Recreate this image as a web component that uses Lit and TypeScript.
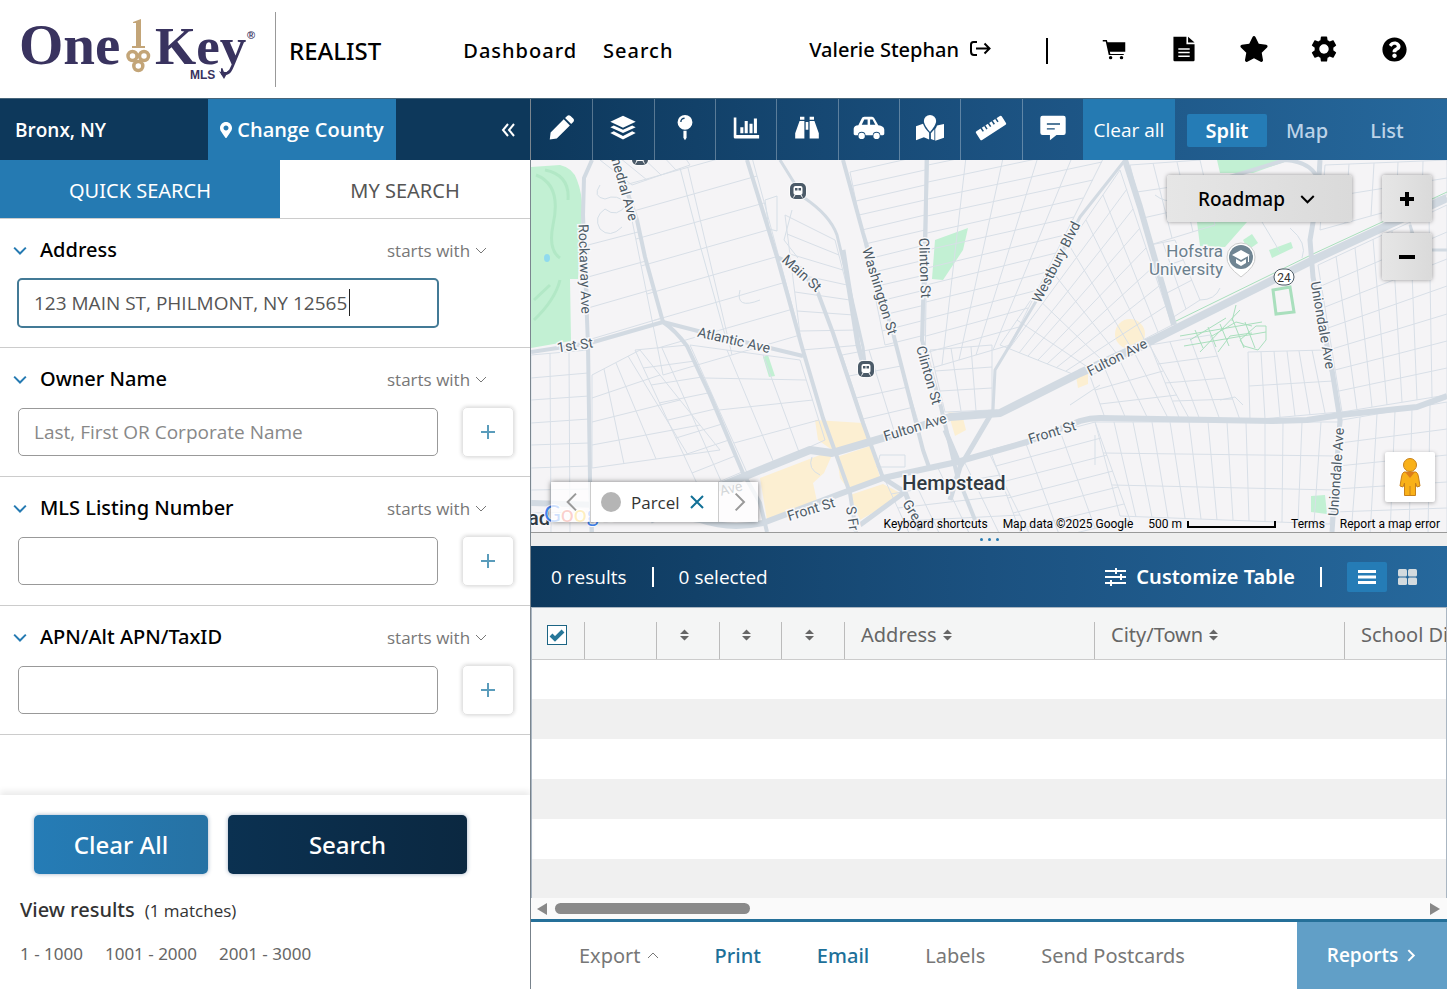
import { LitElement, html, svg, css } from "lit";
import { customElement, property } from "lit/decorators.js";
import { classMap } from "lit/directives/class-map.js";

type Pt = [number, number];

const shared = css`
  :host { display: block; font-family: "Open Sans", sans-serif; }
  * { box-sizing: border-box; }
  button, input, select { font: inherit; color: inherit; margin: 0; }
  button { border: 0; background: none; padding: 0; cursor: pointer; }
  select { appearance: none; border: 0; background: none; padding: 0; cursor: pointer; }
  a { color: inherit; text-decoration: none; }
  svg { display: block; flex: none; }
`;

const chevron = (dir: "down" | "up" | "right" | "left", size: number, width = 2) => {
  const d = { down: "M1 4l5 5 5-5", up: "M1 9l5-5 5 5", right: "M4 1l5 5-5 5", left: "M9 1L4 6l5 5" }[dir];
  return html`<svg width=${size} height=${size} viewBox="0 0 12 12" fill="none" stroke="currentColor" stroke-width=${width} aria-hidden="true"><path d=${d} vector-effect="non-scaling-stroke"></path></svg>`;
};

const icons: Record<string, unknown> = {
  pencil: svg`<path d="M3 29l1-8L19 6l7 7L11 28z M20.500 4.500l2.300-2.300c1.200-1.200 2.800-1.200 4 0l3 3c1.200 1.200 1.200 2.800 0 4l-2.300 2.300z" transform="translate(-1 0)"/>`,
  layers: svg`<path d="M16 2l14.500 6.800L16 15.600 1.500 8.800z"/><path d="M5.500 13l-4 2L16 21.800 30.500 15l-4-2L16 18z"/><path d="M5.500 19.600l-4 2L16 29.200l14.500-7.600-4-2L16 25z"/>`,
  pin: svg`<path fill-rule="evenodd" d="M16 1a8.500 8.500 0 1 1 0 17 8.500 8.500 0 0 1 0-17zm-.5 3a5 5 0 0 0-5 5.200h1.600a3.400 3.400 0 0 1 3.400-3.600z"/><path d="M14.200 19h3.600v8L16 30l-1.800-3z"/>`,
  chart: svg`<path d="M2 4h3v20h26v4H3.500A1.500 1.500 0 0 1 2 26.500zM9.500 15H13v7H9.500zM14.500 8H18v14h-3.500zM20 11h3.500v11H20zM25 5h3.500v17H25z"/>`,
  binoculars: svg`<path d="M8 3h5v3.500H8zM19 3h5v3.500h-5zM7.500 8H13v20H2.500v-6zM24.500 8H19v20h10.500v-6zM14.500 9h3v9h-3z"/>`,
  car: svg`<path fill-rule="evenodd" d="M5 12l3.500-7C9 4 10 3 11.500 3H19c1.500 0 2.500.6 3.200 1.600L26.500 12c4 .5 6.500 2 6.500 5v4c0 1-.6 1.800-1.600 1.800h-2.600a4.200 4.200 0 0 0-8.300 0h-7.700a4.200 4.200 0 0 0-8.300 0H1.600C.6 22.800 0 22 0 21v-5c0-2.500 2-4 5-4zm3.700-.5H15V6h-3.600zm9-5.500v5.500h5.600L20.300 6z" transform="translate(-1.500 0) scale(1.060)"/><circle cx="7.600" cy="25" r="3.600"/><circle cx="24.600" cy="25" r="3.600"/>`,
  mapPin: svg`<path d="M16 1a7 7 0 0 1 7 7C23 13 16 20.500 16 20.500S9 13 9 8a7 7 0 0 1 7-7z"/><path d="M0 14l8-3c1 3 3.500 7 7 10.500V29l-6-2.500L0 30zM32 11.500V27l-10 3.500V17c1-1.500 1.700-2.800 2-4zM17 22l4-4.500V30l-4-1.500z"/>`,
  ruler: svg`<path d="M0 10h32a1.500 1.500 0 0 1 1.500 1.500v9A1.500 1.500 0 0 1 32 22H0a1.500 1.500 0 0 1-1.500-1.500v-9A1.500 1.500 0 0 1 0 10z" transform="rotate(-33 16 16)"/><path d="M6.500 9.500v5M11.500 9.500v5M16.500 9.500v5M21.500 9.500v5M26.500 9.500v5" stroke="#1b4f7a" stroke-width="1.700" transform="rotate(-33 16 16)"/>`,
  comment: svg`<path d="M4 2h24a2.500 2.500 0 0 1 2.500 2.500v17A2.500 2.500 0 0 1 28 24h-8l-7.500 6v-6H4a2.500 2.500 0 0 1-2.500-2.500v-17A2.500 2.500 0 0 1 4 2z"/><path d="M9 11.500h15M9 17h9" stroke="#1b4f7a" stroke-width="1.600"/>`,
  cart: svg`<path d="M1 4h5.500l.8 3H31v12.500H10.500l.6 3H29V24H9L5 6H1z"/><circle cx="11.500" cy="27.500" r="2.300"/><circle cx="26" cy="27.500" r="2.300"/>`,
  file: svg`<path fill-rule="evenodd" d="M3 1h16v9h10v19.500a1.500 1.500 0 0 1-1.500 1.500h-23A1.500 1.500 0 0 1 3 29.500zM9 15v1.800h14V15zm0 4.500v1.800h14v-1.800zm0 4.500v1.800h14V24zM21 1l8 7h-8z"/>`,
  star: svg`<path transform="scale(.0625) translate(-32 0)" d="M259.3 17.800L194 150.200 47.900 171.500c-26.200 3.800-36.700 36.100-17.700 54.600l105.700 103-25 145.500c-4.500 26.300 23.200 46 46.400 33.700L288 439.600l130.700 68.700c23.200 12.200 50.900-7.400 46.400-33.700l-25-145.500 105.700-103c19-18.500 8.500-50.800-17.700-54.600L382 150.200 316.700 17.800c-11.700-23.600-45.600-23.900-57.400 0z"/>`,
  gear: svg`<path transform="translate(-3.200 -3.200) scale(1.600)" d="M19.140 12.940c.04-.3.060-.61.060-.94 0-.32-.02-.64-.07-.94l2.030-1.580c.18-.14.230-.41.120-.61l-1.920-3.320c-.12-.22-.37-.29-.59-.22l-2.390.96c-.5-.38-1.030-.7-1.620-.94l-.36-2.540c-.04-.24-.24-.41-.48-.41h-3.840c-.24 0-.43.170-.47.410l-.36 2.540c-.59.240-1.130.570-1.620.940l-2.390-.96c-.22-.08-.47 0-.59.220L2.740 8.870c-.12.210-.08.470.120.610l2.030 1.580c-.05.300-.09.630-.09.940s.02.640.07.940l-2.030 1.580c-.18.140-.23.410-.12.610l1.920 3.320c.12.220.37.290.59.220l2.390-.96c.5.380 1.030.7 1.620.94l.36 2.540c.05.240.24.410.48.410h3.840c.24 0 .44-.17.470-.41l.36-2.540c.59-.24 1.130-.56 1.620-.94l2.390.96c.22.080.47 0 .59-.22l1.920-3.320c.12-.22.070-.47-.12-.61zM12 15.600c-1.980 0-3.600-1.620-3.600-3.600s1.620-3.600 3.600-3.600 3.600 1.620 3.600 3.600-1.620 3.600-3.600 3.600z"/>`,
  help: svg`<path transform="scale(.0625)" d="M504 256c0 136.997-111.043 248-248 248S8 392.997 8 256C8 119.083 119.043 8 256 8s248 111.083 248 248zM262.655 90c-54.497 0-89.255 22.957-116.549 63.758-3.536 5.286-2.353 12.415 2.715 16.258l34.699 26.310c5.205 3.947 12.621 3.008 16.665-2.122 17.864-22.658 30.113-35.797 57.303-35.797 20.429 0 45.698 13.148 45.698 32.958 0 14.976-12.363 22.667-32.534 33.976C247.128 238.528 216 254.941 216 296v4c0 6.627 5.373 12 12 12h56c6.627 0 12-5.373 12-12v-1.333c0-28.462 83.186-29.647 83.186-106.667 0-58.002-60.165-102-116.531-102zM256 338c-25.365 0-46 20.635-46 46 0 25.364 20.635 46 46 46s46-20.636 46-46c0-25.365-20.635-46-46-46z"/>`,
};

const icon = (name: string, size: number) =>
  html`<svg width=${size} height=${size} viewBox="0 0 32 32" fill="currentColor" overflow="visible" aria-hidden="true">${icons[name]}</svg>`;

/* ---------- header ---------- */

@customElement("site-header")
export class SiteHeader extends LitElement {
  static styles = [shared, css`
    .bar { display: flex; align-items: center; height: 99px; background: #fff; color: #000; border-bottom: 1px solid #47657a; font-family: "Noto Sans", "Open Sans", sans-serif; font-size: 20px; font-weight: 500; }
    .logo { margin-left: 18px; }
    .product { display: flex; align-items: center; height: 75px; margin-left: 17px; padding: 2px 0 0 13px; border-left: 1px solid #999; font-size: 24px; }
    nav { display: flex; gap: 26px; margin: 3px 0 0 82px; letter-spacing: 1px; }
    .user { display: flex; align-items: center; gap: 10px; margin-left: auto; }
    .rule { width: 2px; height: 26px; margin: 4px 0 0 55px; background: #000; }
    .actions { display: flex; gap: 44px; margin: 0 40px 0 53px; }
    .actions button { display: grid; place-items: center; width: 26px; height: 32px; }
  `];

  render() {
    return html`
      <header class="bar">
        <a class="logo" href="#" aria-label="OneKey MLS">
          <svg width="240" height="76" viewBox="18 12 240 76" fill="#39335f">
            <g font-family="Liberation Serif, serif" font-weight="bold">
              <text x="19" y="65" font-size="57">One</text>
              <text x="155" y="65" font-size="53">Key</text>
            </g>
            <g fill="#c3a578">
              <path d="M133 23l8-3v27h4v2h-13v-2h4V24h-3z"></path>
              <g fill="none" stroke="#c3a578" stroke-width="3.500">
                <circle cx="132.500" cy="57" r="4.500"></circle><circle cx="144" cy="57" r="4.500"></circle><circle cx="138.300" cy="67" r="4.500"></circle>
              </g>
            </g>
            <path d="M219 72q6 4 10-1l-5 9z"></path>
            <text x="190" y="80" font-family="Liberation Sans, sans-serif" font-weight="bold" font-size="12">MLS</text>
            <text x="247" y="40" font-family="Liberation Sans, sans-serif" font-weight="bold" font-size="11">®</text>
          </svg>
        </a>
        <div class="product">REALIST</div>
        <nav><a href="#">Dashboard</a><a href="#">Search</a></nav>
        <a class="user" href="#">Valerie Stephan
          <svg width="22" height="20" viewBox="0 0 22 20" fill="none" stroke="#000" stroke-width="2"><path d="M8 3H4.500Q2 3 2 5.500v7Q2 16 5 16h3M7 9.500h13M15.500 4.500l5 5-5 5"></path></svg>
        </a>
        <div class="rule"></div>
        <div class="actions">
          <button aria-label="Cart">${icon("cart", 24)}</button>
          <button aria-label="Documents">${icon("file", 26)}</button>
          <button aria-label="Favorites">${icon("star", 26)}</button>
          <button aria-label="Settings">${icon("gear", 26)}</button>
          <button aria-label="Help">${icon("help", 25)}</button>
        </div>
      </header>`;
  }
}

/* ---------- search panel ---------- */

interface Field { id: string; label: string; value?: string; placeholder?: string; add: boolean; active?: boolean }

const fields: Field[] = [
  { id: "address", label: "Address", value: "123 MAIN ST, PHILMONT, NY 12565", add: false, active: true },
  { id: "owner", label: "Owner Name", placeholder: "Last, First OR Corporate Name", add: true },
  { id: "mls", label: "MLS Listing Number", add: true },
  { id: "apn", label: "APN/Alt APN/TaxID", add: true },
];

@customElement("search-panel")
export class SearchPanel extends LitElement {
  static styles = [shared, css`
    :host { display: flex; flex-direction: column; min-height: 0; background: #fff; }
    .county { display: flex; align-items: stretch; height: 61px; background: #0d385b; color: #fff; font-size: 20px; font-weight: 600; }
    .place { display: flex; align-items: center; width: 208px; padding-left: 15px; font-size: 19px; }
    .change { display: flex; align-items: center; justify-content: center; gap: 5px; width: 188px; background: #257ab2; }
    .collapse { margin-left: auto; padding: 0 15px; }
    .tabs { display: grid; grid-template-columns: 280px 1fr; height: 59px; border-bottom: 1px solid #ccc; font-family: "Noto Sans", "Open Sans", sans-serif; font-size: 20px; }
    .tab { padding-top: 2px; color: #555; }
    .tab.on { background: #257ab2; color: #fff; }
    .field { display: grid; grid-template-columns: 422px 52px; column-gap: 23px; align-content: start; height: 129px; padding: 16px 15px 0 17px; border-bottom: 1px solid #ccc; }
    .head { grid-column: 1 / -1; display: flex; align-items: center; height: 28px; padding-right: 27px; margin-bottom: 15px; }
    .head > svg { color: #257ab2; margin: 2px 13px 0 -4px; }
    .head label { font-family: "Noto Sans", "Open Sans", sans-serif; font-size: 20px; font-weight: 500; color: #000; }
    .mode { display: flex; align-items: center; gap: 4px; margin-left: auto; padding-top: 2px; font-size: 17px; color: #777; }
    .box { position: relative; display: flex; }
    .box input { flex: 1; height: 48px; margin: 1px; padding: 0 15px; border: 1px solid #999; border-radius: 5px; background: #fff; outline: 0; font-size: 19px; color: #555; }
    .box input::placeholder { color: #888; opacity: 1; }
    .box.active input { height: 50px; margin: 0; border: 2px solid #437a96; }
    .caret { position: absolute; left: 332px; top: 11px; width: 1px; height: 27px; background: #222; }
    .add { display: grid; place-items: center; height: 50px; border: 1px solid #e4e4e4; border-radius: 5px; box-shadow: 0 0 4px rgba(0, 0, 0, .2); color: #5a9cbb; }
    .actions { margin-top: auto; height: 194px; padding: 20px 20px 0 20px; box-shadow: 0 -4px 6px rgba(0, 0, 0, .08); }
    .buttons { display: grid; grid-template-columns: 174px 239px; gap: 20px; height: 59px; padding-left: 14px; font-family: "Noto Sans", "Open Sans", sans-serif; font-size: 24px; font-weight: 500; color: #fff; }
    .buttons button { border-radius: 5px; box-shadow: 0 0 4px rgba(20, 60, 110, .4); }
    .clear { background: linear-gradient(90deg, #257cb6, #2672a4); }
    .go { background: linear-gradient(90deg, #0b3151, #0b2841); }
    .matches { display: flex; align-items: baseline; gap: 10px; margin-top: 22px; font-family: "Noto Sans", "Open Sans", sans-serif; font-size: 20px; line-height: 28px; font-weight: 500; color: #333; }
    .matches small { font-family: "Open Sans", sans-serif; font-size: 17px; font-weight: 400; }
    .ranges { display: flex; gap: 22px; margin-top: 17px; font-family: "Noto Sans", "Open Sans", sans-serif; font-size: 17px; line-height: 24px; color: #666; }
  `];

  private field(f: Field) {
    return html`
      <section class="field">
        <div class="head">
          ${chevron("down", 14)}
          <label for=${f.id}>${f.label}</label>
          <div class="mode">
            <select aria-label="${f.label} match"><option>starts with</option></select>
            ${chevron("down", 12, 1)}
          </div>
        </div>
        <div class=${classMap({ box: true, active: !!f.active })}>
          <input id=${f.id} type="text" .value=${f.value ?? ""} placeholder=${f.placeholder ?? ""} />
          ${f.active ? html`<span class="caret"></span>` : ""}
        </div>
        ${f.add ? html`<button class="add" aria-label="Add ${f.label}">
          <svg width="16" height="16" viewBox="0 0 16 16" stroke="currentColor" stroke-width="2"><path d="M8 1v14M1 8h14"></path></svg>
        </button>` : ""}
      </section>`;
  }

  render() {
    return html`
      <div class="county">
        <span class="place">Bronx, NY</span>
        <button class="change">
          <svg width="12" height="18" viewBox="0 0 384 512" fill="#fff"><path d="M172.268 501.670C26.970 291.031 0 269.413 0 192 0 85.961 85.961 0 192 0s192 85.961 192 192c0 77.413-26.970 99.031-172.268 309.670-9.535 13.774-29.930 13.773-39.464 0zM192 272c44.183 0 80-35.817 80-80s-35.817-80-80-80-80 35.817-80 80 35.817 80 80 80z"></path></svg>
          Change County
        </button>
        <button class="collapse" aria-label="Collapse panel">
          <svg width="14" height="14" viewBox="0 0 14 14" fill="none" stroke="#fff" stroke-width="2"><path d="M7 1L2 7l5 6M13 1L8 7l5 6"></path></svg>
        </button>
      </div>
      <div class="tabs">
        <button class="tab on">QUICK SEARCH</button>
        <button class="tab">MY SEARCH</button>
      </div>
      ${fields.map((f) => this.field(f))}
      <div class="actions">
        <div class="buttons"><button class="clear">Clear All</button><button class="go">Search</button></div>
        <div class="matches">View results <small>(1 matches)</small></div>
        <div class="ranges"><a href="#">1 - 1000</a><a href="#">1001 - 2000</a><a href="#">2001 - 3000</a></div>
      </div>`;
  }
}

/* ---------- toolbar ---------- */

const tools = [
  ["pencil", "Draw"], ["layers", "Layers"], ["pin", "Pin"], ["chart", "Statistics"], ["binoculars", "Nearby"],
  ["car", "Drive"], ["mapPin", "Boundaries"], ["ruler", "Measure"], ["comment", "Notes"],
];

@customElement("map-toolbar")
export class MapToolbar extends LitElement {
  static styles = [shared, css`
    .bar { display: flex; height: 61px; background: linear-gradient(90deg, #0d385c, #1b5180 50%, #26689c); color: #fff; }
    .tools { display: grid; grid-template-columns: repeat(9, 1fr); flex: 0 1 552px; }
    .tools button { display: grid; place-items: center; padding-bottom: 4px; border-left: 1px solid rgba(255, 255, 255, .3); }
    .tools button:first-child { border-left-color: transparent; }
    .clear { width: 92px; background: #257ab2; font-size: 19px; }
    .views { display: flex; align-items: center; padding: 2px 0 0 12px; font-family: "Noto Sans", "Open Sans", sans-serif; font-size: 20px; font-weight: 500; }
    .views button { width: 80px; height: 33px; border-radius: 2px; color: #bcd3e8; }
    .views .on { background: #257cb6; color: #fff; font-weight: 600; }
  `];

  render() {
    return html`
      <div class="bar">
        <div class="tools">${tools.map(([id, label]) => html`<button aria-label=${label}>${icon(id, 28)}</button>`)}</div>
        <button class="clear">Clear all</button>
        <div class="views"><button class="on">Split</button><button>Map</button><button>List</button></div>
      </div>`;
  }
}

/* ---------- map ---------- */

// Each block of side streets is a quad (clockwise corners) cut into columns and rows.
const blocks: [Pt, Pt, Pt, Pt, number, number][] = [
  [[625, 185], [750, 150], [800, 335], [663, 375], 2, 7],
  [[588, 245], [638, 232], [662, 318], [588, 340], 1, 3],
  [[531, 355], [588, 350], [590, 535], [531, 535], 3, 8],
  [[592, 375], [640, 350], [720, 450], [592, 468], 4, 4],
  [[635, 350], [688, 345], [742, 472], [700, 490], 2, 8],
  [[690, 345], [800, 360], [825, 440], [748, 475], 3, 4],
  [[850, 172], [925, 155], [925, 335], [885, 345], 1, 12],
  [[785, 215], [835, 240], [862, 345], [802, 350], 1, 7],
  [[928, 165], [1120, 125], [1010, 345], [925, 370], 5, 12],
  [[1120, 170], [1172, 325], [1075, 375], [1000, 345], 8, 7],
  [[990, 450], [1095, 422], [1130, 520], [1025, 545], 3, 6],
  [[1095, 422], [1340, 422], [1330, 524], [1120, 516], 13, 3],
  [[1090, 376], [1150, 346], [1190, 420], [1105, 418], 4, 3],
  [[1150, 345], [1210, 335], [1240, 420], [1180, 420], 3, 4],
  [[1248, 352], [1325, 350], [1340, 412], [1250, 420], 6, 2],
  [[1318, 265], [1447, 205], [1447, 395], [1342, 412], 7, 7],
  [[1342, 420], [1447, 402], [1447, 535], [1332, 535], 6, 5],
  [[885, 480], [990, 455], [1030, 535], [910, 535], 4, 4],
  [[842, 355], [895, 345], [920, 428], [870, 440], 2, 4],
  [[1130, 165], [1200, 160], [1215, 225], [1150, 245], 3, 3],
  [[1150, 245], [1175, 240], [1200, 300], [1172, 318], 2, 3],
  [[1325, 165], [1447, 160], [1447, 195], [1320, 230], 5, 2],
  [[930, 350], [992, 345], [992, 410], [945, 412], 3, 3],
  [[600, 160], [680, 150], [690, 165], [632, 185], 4, 1],
];

const lerp = (a: Pt, b: Pt, t: number): Pt => [a[0] + (b[0] - a[0]) * t, a[1] + (b[1] - a[1]) * t];
const seg = (a: Pt, b: Pt) => `M${a.map(Math.round).join(" ")}L${b.map(Math.round).join(" ")}`;
const sideStreets = blocks
  .map(([a, b, c, d, cols, rows]) => {
    let path = "";
    for (let i = 0; i <= cols; i++) path += seg(lerp(a, b, i / cols), lerp(d, c, i / cols));
    for (let j = 0; j <= rows; j++) path += seg(lerp(a, d, j / rows), lerp(b, c, j / rows));
    return path;
  })
  .join("");

const roads: [string, number][] = [
  ["M592 160L584 178L583 215L588 345L590 480L592 532", 4],
  ["M616 160L637 220L645 257L663 322Q675 330 687 346L710 395L743 473L760 503L767 532", 4],
  ["M531 352L590 343L663 322L698 331L770 348L803 356", 4],
  ["M747 160L777 257L802 347L823 418L850 493L856 532", 4],
  ["M777 257L800 268L818 293L833 333L863 423L883 478", 4],
  ["M780 160L803 197Q830 215 837 235L843 260L863 347L867 378", 3],
  ["M843 250L858 345L862 360", 5],
  ["M843 160L863 233L893 333L923 450L930 470", 4],
  ["M927 160L925 237L922 340L940 403L957 475L975 520", 4],
  ["M650 520L700 495L743 477L810 450L832 453L883 438L950 417L1000 413L1080 373L1153 340L1313 260L1447 198", 8],
  ["M531 503L600 505L700 520Q730 530 763 523L837 495L883 478L957 462L1027 442L1080 421Q1090 418 1100 418L1273 421L1307 420L1340 415L1417 407L1447 396", 6],
  ["M990 416L960 467L950 500M945 430L960 465", 5],
  ["M1125 160L1080 217L1035 303L1007 350L995 370L993 410", 3],
  ["M1125 160L1140 207L1160 277L1174 325", 6],
  ["M1320 160L1318 193L1310 240L1313 277L1332 370L1340 420L1332 532", 5],
  ["M1220 180L1285 160Q1315 162 1320 185", 4],
  ["M883 478L905 492L920 530M905 492L860 525", 5],
  ["M1410 225L1418 250L1447 250", 3],
];

const labels: [string, number, number, number][] = [
  ["hedral Ave", 625, 189, 74],
  ["Rockaway Ave", 585, 269, 88],
  ["1st St", 575, 345, -8],
  ["Atlantic Ave", 734, 340, 13],
  ["Main St", 802, 273, 42],
  ["Washington St", 880, 291, 73],
  ["Clinton St", 925, 268, 88],
  ["Clinton St", 929, 375, 74],
  ["Fulton Ave", 915, 427, -17],
  ["Fulton Ave", 1117, 357, -27],
  ["Front St", 811, 509, -17],
  ["Front St", 1052, 432, -17],
  ["Westbury Blvd", 1056, 262, -63],
  ["Uniondale Ave", 1323, 325, 80],
  ["Uniondale Ave", 1336, 472, -86],
  ["Gre", 912, 510, 58],
];

const transit = (x: number, y: number) => svg`
  <g transform="translate(${x} ${y})">
    <rect x="-9" y="-9" width="18" height="18" rx="6" fill="#fff" opacity=".7"/>
    <rect x="-8" y="-8" width="16" height="16" rx="5" fill="#4b5a68"/>
    <rect x="-4.500" y="-5" width="9" height="9" rx="2" fill="#fff"/>
    <path d="M-3-3h2.500v2.500H-3zM.5-3H3v2.500H.5z" fill="#4b5a68"/>
    <path d="M-3 4l-1.500 2.500M3 4l1.500 2.500" stroke="#fff"/>
  </g>`;

@customElement("map-view")
export class MapView extends LitElement {
  static styles = [shared, css`
    :host { position: relative; overflow: hidden; background: #f5f4f6; }
    .canvas { position: absolute; inset: 0; width: 100%; height: 100%; }
    .type { position: absolute; top: 15px; right: 95px; display: flex; align-items: center; gap: 15px; width: 185px; height: 47px; padding-left: 31px; font-family: "Noto Sans", "Open Sans", sans-serif; font-size: 19px; font-weight: 500; }
    .gray { border-radius: 3px; background: linear-gradient(90deg, #e6e6e6, #dadada); box-shadow: 0 0 4px rgba(0, 0, 0, .4); color: #000; }
    .zoom { position: absolute; top: 15px; right: 15px; display: grid; gap: 11px; }
    .zoom button { display: grid; place-items: center; width: 50px; height: 47px; }
    .pegman { position: absolute; right: 12px; bottom: 30px; display: grid; place-items: center; width: 50px; height: 50px; background: #fff; border-radius: 2px; box-shadow: 0 1px 4px rgba(0, 0, 0, .3); }
    .parcel { position: absolute; left: 20px; bottom: 10px; display: flex; height: 40px; box-shadow: 0 0 5px rgba(0, 0, 0, .5); color: #999; }
    .parcel .nav { display: grid; place-items: center; width: 39px; background: rgba(255, 255, 255, .75); }
    .chip { display: flex; align-items: center; gap: 10px; width: 129px; padding-left: 10px; background: #fff; border: solid #ccc; border-width: 0 1px; font-size: 17px; color: #333; }
    .dot { width: 20px; height: 20px; border-radius: 50%; background: #b5b5b5; }
    .legal { position: absolute; right: 7px; bottom: 1px; display: flex; align-items: center; gap: 15px; font-family: Roboto, sans-serif; font-size: 12px; line-height: 14px; color: #000; }
    .scale { display: flex; align-items: center; gap: 5px; }
    .scale i { width: 89px; height: 7px; border: 2px solid #000; border-top: 0; }
  `];

  render() {
    return html`
      <svg class="canvas" viewBox="531 160 916 372" preserveAspectRatio="xMinYMin slice" role="img" aria-label="Map of Hempstead">
        <g fill="#c2f0d3">
          <path d="M531 167L560 165Q573 168 577 180Q583 195 582 215L578 279L570 279L571 341L531 348z"></path>
          <path d="M935 240L968 228L963 250Q955 262 943 280L932 279z"></path>
          <path d="M1217 160H1290L1253 173H1220zM1197 222H1247L1225 247L1200 246zM1243 240L1252 234L1258 243L1248 250zM1269 250L1291 242L1293 248L1272 258z"></path>
          <path d="M763 357L768 355L775 376L769 377zM1311 496L1325 495L1327 514L1311 512z"></path>
        </g>
        <g fill="none" stroke="#b2e8c6" stroke-width="3">
          <path d="M536 175Q562 185 553 225Q548 250 560 258M545 170Q570 175 568 200M534 300L550 285M534 320Q555 300 560 280"></path>
        </g>
        <ellipse cx="547" cy="258" rx="3" ry="4" fill="#90daee"></ellipse>
        <path fill="#fcefd2" d="M760 478L820 455L832 455L824 473L813 483L818 506L767 520zM815 420L863 423L870 440L835 452L818 440zM837 457L870 446L880 477L850 492L840 478zM850 495L883 484L904 495L860 520zM948 412L962 414L966 430L955 436zM1076 376L1088 373L1088 384L1078 388z"></path>
        <circle cx="1130" cy="334" r="15" fill="#fcefd2"></circle>
        <path d=${sideStreets} fill="none" stroke="#d8dfe7" stroke-width="1"></path>
        <path fill="none" stroke="#d6dfe7" d="M600 185q-8 12 5 14q12-6 22 5q-10 15-22 5q-12 8-5 20q10 10 22-2M680 168L700 245L725 335M792 210l-8 30 14 18 M765 200l12-4v35l-8-2zM740 290q-5 20 20 10M812 457q-5 12 8 18M880 455h25v12h-28zM1095 435v30M1220 400l15-3 8 8M1100 385l-30 20M1155 195q20 15 35-8M1200 300q15 0 20-12M1262 222l18 30M1290 228q18 15 12 30"></path>
        <g fill="none" stroke="#a9dfbd">
          <path d="M1180 336L1262 322M1184 346L1266 332M1195 330l8 18M1208 327l8 20M1220 324l9 22M1232 318l12 30M1245 322l10 26M1200 352L1240 310M1240 340L1256 326h10v14l-8 10-14-4zM1190 340L1226 318M1212 336l24-14 16 4M1218 352l12-16 22-3M1236 305l-4 16"></path>
          <path d="M1273 290l17-3 4 25-18 2z" stroke-width="3"></path>
          <path d="M1174 322L1313 254L1447 192"></path>
        </g>
        <g fill="none" stroke="#d2dae2" stroke-linejoin="round">
          ${roads.map(([d, w]) => svg`<path d=${d} stroke-width=${w}/>`)}
        </g>
        ${transit(798, 191)} ${transit(866, 369)} ${transit(640, 157)}
        <g fill="#4d5b66" stroke="#f8f8fa" stroke-width="3" paint-order="stroke" font-family="Roboto, sans-serif" font-size="14" text-anchor="middle">
          ${labels.map(([t, x, y, r]) => svg`<text dominant-baseline="central" transform="translate(${x} ${y}) rotate(${r})">${t}</text>`)}
          <text text-anchor="start" transform="translate(846 507) rotate(82)">S Fr</text>
          <g fill="#6b7f8d" font-size="17" text-anchor="end">
            <text x="1223" y="257">Hofstra</text><text x="1223" y="275">University</text>
          </g>
          <g fill="#303a42" font-size="20" font-weight="500">
            <text x="954" y="490">Hempstead</text><text x="539" y="525">ad</text>
          </g>
        </g>
        <path d="M1241 277Q1226 266 1227 257A14 14 0 0 1 1255 257Q1256 266 1241 277z" fill="#fff" stroke="#ccc"></path>
        <circle cx="1241" cy="257" r="12" fill="#708593"></circle>
        <path d="M1232 255l9-5 9 5-9 5zM1236 259v4l5 3 5-3v-4l-5 3zM1249 256v6h-1v-6z" fill="#fff"></path>
        <rect x="1274" y="269" width="20" height="16" rx="8" fill="#fff" stroke="#4d5b66"></rect>
        <text x="1284" y="282" text-anchor="middle" font-family="Roboto, sans-serif" font-size="12" fill="#333">24</text>
        <text x="544" y="522" font-family="Lato, sans-serif" font-size="23" stroke="#fff" stroke-width="2" paint-order="stroke" aria-hidden="true"><tspan fill="#4285f4">G</tspan><tspan fill="#ea4335">o</tspan><tspan fill="#fbbc04">o</tspan><tspan fill="#4285f4">g</tspan><tspan fill="#34a853">l</tspan><tspan fill="#ea4335">e</tspan></text>
        <text transform="translate(732 493) rotate(-14)" text-anchor="middle" font-family="Roboto, sans-serif" font-size="14" fill="#4d5b66">Ave</text>
      </svg>

      <div class="type gray">
        <select aria-label="Map type"><option>Roadmap</option></select>
        ${chevron("down", 15)}
      </div>
      <div class="zoom">
        <button class="gray" aria-label="Zoom in"><svg width="16" height="16" viewBox="0 0 16 16" stroke="#000" stroke-width="4"><path d="M8 1v14M1 8h14"></path></svg></button>
        <button class="gray" aria-label="Zoom out"><svg width="16" height="16" viewBox="0 0 16 16" stroke="#000" stroke-width="4"><path d="M0 8h16"></path></svg></button>
      </div>
      <button class="pegman" aria-label="Street View">
        <svg width="22" height="38" viewBox="0 0 22 38" fill="#f9b119" stroke="#c7801a" stroke-width="1">
          <path d="M5 14h12q2 1 2.500 5l1.500 9-3 1-1.500-4v12.500h-11V25L4 29l-3-1 1.500-9Q3 15 5 14zM11 28v9"></path>
          <path d="M6 14h10l-5 6z" fill="#dc7d1c" stroke="none"></path>
          <circle cx="11" cy="7" r="6.500"></circle>
        </svg>
      </button>
      <div class="parcel">
        <button class="nav" aria-label="Previous">${chevron("left", 20)}</button>
        <div class="chip"><span class="dot"></span>Parcel
          <button aria-label="Remove Parcel"><svg width="14" height="14" viewBox="0 0 14 14" stroke="#127096" stroke-width="2"><path d="M1 1l12 12M13 1L1 13"></path></svg></button>
        </div>
        <button class="nav" aria-label="Next">${chevron("right", 20)}</button>
      </div>
      <div class="legal">
        <a href="#">Keyboard shortcuts</a><span>Map data ©2025 Google</span>
        <span class="scale">500 m <i></i></span>
        <a href="#">Terms</a><a href="#">Report a map error</a>
      </div>`;
  }
}

/* ---------- results ---------- */

@customElement("results-panel")
export class ResultsPanel extends LitElement {
  @property({ type: Number }) rows = 6;

  static styles = [shared, css`
    :host { display: flex; flex-direction: column; min-height: 0; min-width: 0; }
    .bar { display: flex; align-items: center; height: 61px; padding: 0 30px 0 20px; background: linear-gradient(90deg, #0d385c, #1b5180 50%, #26689c); color: #fff; font-size: 19px; }
    .sep { width: 2px; height: 20px; background: #fff; }
    .counts { display: flex; align-items: center; gap: 25px; }
    .tools { display: flex; align-items: center; margin-left: auto; font-family: "Noto Sans", "Open Sans", sans-serif; font-size: 20px; font-weight: 600; }
    .customize { display: flex; align-items: center; gap: 10px; margin-right: 25px; }
    .list { display: grid; place-items: center; width: 40px; height: 30px; margin: 0 11px 0 25px; border-radius: 2px; background: #257cb6; }
    .scroller { flex: 1; min-height: 0; overflow: hidden; border: 1px solid #aab6c2; border-bottom: 0; }
    table { width: 1343px; table-layout: fixed; border-collapse: collapse; }
    th { height: 51px; padding: 0; background: #f4f5f5; border-bottom: 1px solid #ccc; font-family: "Noto Sans", "Open Sans", sans-serif; font-size: 20px; font-weight: 400; color: #666; text-align: left; vertical-align: bottom; }
    .cell { display: flex; align-items: center; justify-content: center; gap: 6px; height: 37px; padding: 0 8px 11px 0; border-right: 1px solid #bbb; }
    .cell.check { padding-right: 2px; }
    .cell.text { justify-content: start; padding-left: 16px; }
    td { height: 40px; padding: 0; }
    tr:nth-child(even) td { background: #f0f0f0; }
    input { appearance: none; width: 20px; height: 20px; border: 1px solid #1c6584; background: #fff url("data:image/svg+xml,%3Csvg xmlns='http://www.w3.org/2000/svg' viewBox='0 0 18 18'%3E%3Cpath d='M3 9l4 4 8-8' fill='none' stroke='%23277799' stroke-width='4'/%3E%3C/svg%3E"); }
    .scroll { display: flex; align-items: center; gap: 8px; height: 21px; padding: 0 7px 0 6px; background: #fafafa; }
    .thumb { width: 195px; height: 11px; margin-right: auto; border-radius: 6px; background: #8a8a8a; }
    .footer { display: flex; align-items: center; gap: 56px; height: 70px; padding-left: 48px; border-top: 3px solid #257099; background: #fff; font-family: "Noto Sans", "Open Sans", sans-serif; font-size: 20px; color: #777; }
    .footer button { padding-bottom: 1px; }
    .footer .link { color: #1d7099; font-weight: 500; }
    .export { display: flex; align-items: center; gap: 6px; }
    .reports { display: flex; align-items: center; justify-content: center; gap: 6px; align-self: stretch; width: 150px; margin-left: auto; background: #619fc7; color: #fff; font-family: "Open Sans", sans-serif; font-size: 19px; font-weight: 600; }
  `];

  private sorter() {
    return svg`<path d="M5 0l5 5H0zM0 7h10l-5 5z"/>`;
  }

  private head(text: string) {
    return html`<div class="cell ${text ? "text" : ""}">${text}<svg width="9" height="12" viewBox="0 0 10 12" fill="#666">${this.sorter()}</svg></div>`;
  }

  render() {
    return html`
      <div class="bar">
        <div class="counts"><span>0 results</span><span class="sep"></span><span>0 selected</span></div>
        <div class="tools">
          <button class="customize">
            <svg width="21" height="20" viewBox="0 0 21 20" fill="none" stroke="#fff" stroke-width="2"><path d="M0 4h21M0 10h21M0 16h21M11 1v6M16 7v6M6 13v6"></path></svg>
            Customize Table
          </button>
          <span class="sep"></span>
          <button class="list" aria-label="List view"><svg width="18" height="14" viewBox="0 0 18 14" stroke="#fff" stroke-width="3"><path d="M0 1.500h18M0 7h18M0 12.500h18"></path></svg></button>
          <button aria-label="Grid view"><svg width="19" height="16" viewBox="0 0 19 16" fill="#d3dade"><rect width="9" height="7.500" rx="1.500"></rect><rect x="10" width="9" height="7.500" rx="1.500"></rect><rect y="8.500" width="9" height="7.500" rx="1.500"></rect><rect x="10" y="8.500" width="9" height="7.500" rx="1.500"></rect></svg></button>
        </div>
      </div>
      <div class="scroller">
        <table>
          <colgroup>
            <col width="53"><col width="72"><col width="63"><col width="62"><col width="63"><col width="250"><col width="250"><col>
          </colgroup>
          <thead>
            <tr>
              <th><div class="cell check"><input type="checkbox" aria-label="Select all" checked /></div></th>
              <th><div class="cell"></div></th>
              <th>${this.head("")}</th><th>${this.head("")}</th><th>${this.head("")}</th>
              <th>${this.head("Address")}</th><th>${this.head("City/Town")}</th><th>${this.head("School District")}</th>
            </tr>
          </thead>
          <tbody>${Array.from({ length: this.rows }, () => html`<tr><td colspan="8"></td></tr>`)}</tbody>
        </table>
      </div>
      <div class="scroll">
        <svg width="10" height="12" viewBox="0 0 10 12" fill="#888"><path d="M10 0v12L0 6z"></path></svg>
        <div class="thumb"></div>
        <svg width="10" height="12" viewBox="0 0 10 12" fill="#888"><path d="M0 0v12l10-6z"></path></svg>
      </div>
      <div class="footer">
        <button class="export">Export ${chevron("up", 12, 1)}</button>
        <button class="link">Print</button>
        <button class="link">Email</button>
        <button>Labels</button>
        <button>Send Postcards</button>
        <button class="reports">Reports ${chevron("right", 13)}</button>
      </div>`;
  }
}

/* ---------- page ---------- */

@customElement("app-root")
export class AppRoot extends LitElement {
  static styles = [shared, css`
    :host { display: flex; flex-direction: column; height: 100vh; overflow: hidden; background: #fff; }
    .main { display: grid; grid-template-columns: 531px minmax(0, 1fr); grid-template-rows: minmax(0, 1fr); flex: 1; min-height: 0; }
    search-panel { border-right: 1px solid #7b868f; }
    .work { display: flex; flex-direction: column; min-width: 0; min-height: 0; }
    map-view { flex: 372; min-height: 0; }
    .splitter { display: flex; align-items: center; justify-content: center; gap: 5px; height: 14px; flex: none; background: #eee; border-top: 1px solid #999; }
    .splitter i { width: 3px; height: 3px; border-radius: 50%; background: #257ab2; }
    results-panel { flex: 443; }
  `];

  render() {
    return html`
      <site-header></site-header>
      <div class="main">
        <search-panel></search-panel>
        <div class="work">
          <map-toolbar></map-toolbar>
          <map-view></map-view>
          <div class="splitter"><i></i><i></i><i></i></div>
          <results-panel></results-panel>
        </div>
      </div>`;
  }
}
